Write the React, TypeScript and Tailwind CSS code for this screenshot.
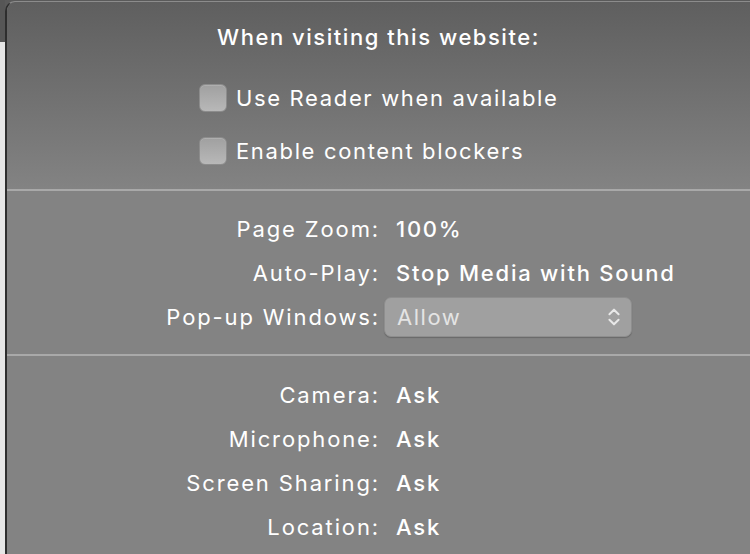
import { ChevronsUpDown } from "lucide-react";

function Checkbox({ label }: { label: string }) {
  return (
    <label className="flex items-center gap-[9px] h-[28px]">
      <span className="w-[28px] h-[28px] rounded-[6px] border border-[#8c8c8c] bg-gradient-to-b from-[#a0a0a0] to-[#b8b8b8] shadow-[inset_0_1px_0_rgba(255,255,255,0.15)]" />
      <span className="text-[22px] leading-none text-white tracking-[0.075em]">{label}</span>
    </label>
  );
}

function Row({ label, children }: { label: string; children: React.ReactNode }) {
  return (
    <div className="grid grid-cols-[373px_1fr] items-center h-[44px]">
      <span className="text-right text-[22px] text-white tracking-[0.085em]">{label}</span>
      <div>{children}</div>
    </div>
  );
}

function Value({ children }: { children: React.ReactNode }) {
  return (
    <span className="pl-[16px] text-[22px] text-white font-medium tracking-[0.08em]">{children}</span>
  );
}

export default function App() {
  return (
    <div
      className="w-[750px] h-[554px] flex overflow-hidden bg-[#5a5a5a]"
      style={{ fontFamily: "Inter, 'Noto Sans', sans-serif" }}
    >
      <div className="w-[5px] shrink-0 flex flex-col">
        <div className="h-[42px] bg-[#565656]" />
        <div className="flex-1 bg-[#e6e6e6]" />
      </div>
      <div className="flex-1 mt-[1px] rounded-tl-[10px] border-l-2 border-t border-[#2e2e2e] border-t-[#8c8c8c] bg-[#838383] overflow-hidden">
        <div className="bg-gradient-to-b from-[#5f5f5f] to-[#838383] h-[187px] flex flex-col items-center">
          <div className="mt-[19px] text-[22px] font-medium text-white tracking-[0.07em]">When visiting this website:</div>
          <div className="mt-[30px] flex flex-col gap-[25px] self-start ml-[192px]">
            <Checkbox label="Use Reader when available" />
            <Checkbox label="Enable content blockers" />
          </div>
        </div>
        <div className="h-[2px] bg-[#a9a9a9]" />
        <div className="pt-[16px] pb-[15px]">
          <Row label="Page Zoom:">
            <Value>100%</Value>
          </Row>
          <Row label="Auto-Play:">
            <Value>Stop Media with Sound</Value>
          </Row>
          <Row label="Pop-up Windows:">
            <div className="ml-[4px] w-[248px] h-[40px] rounded-[7px] bg-[#a0a0a0] border border-[#8e8e8e] shadow-[0_1px_1px_rgba(0,0,0,0.2)] flex items-center justify-between pl-[12px] pr-[6px]">
              <span className="text-[22px] text-[#e4e4e4] tracking-[0.07em]">Allow</span>
              <ChevronsUpDown className="w-[22px] h-[26px] text-[#e8e8e8]" strokeWidth={2.2} />
            </div>
          </Row>
        </div>
        <div className="h-[2px] bg-[#a9a9a9]" />
        <div className="pt-[17px]">
          <Row label="Camera:">
            <Value>Ask</Value>
          </Row>
          <Row label="Microphone:">
            <Value>Ask</Value>
          </Row>
          <Row label="Screen Sharing:">
            <Value>Ask</Value>
          </Row>
          <Row label="Location:">
            <Value>Ask</Value>
          </Row>
        </div>
      </div>
    </div>
  );
}
